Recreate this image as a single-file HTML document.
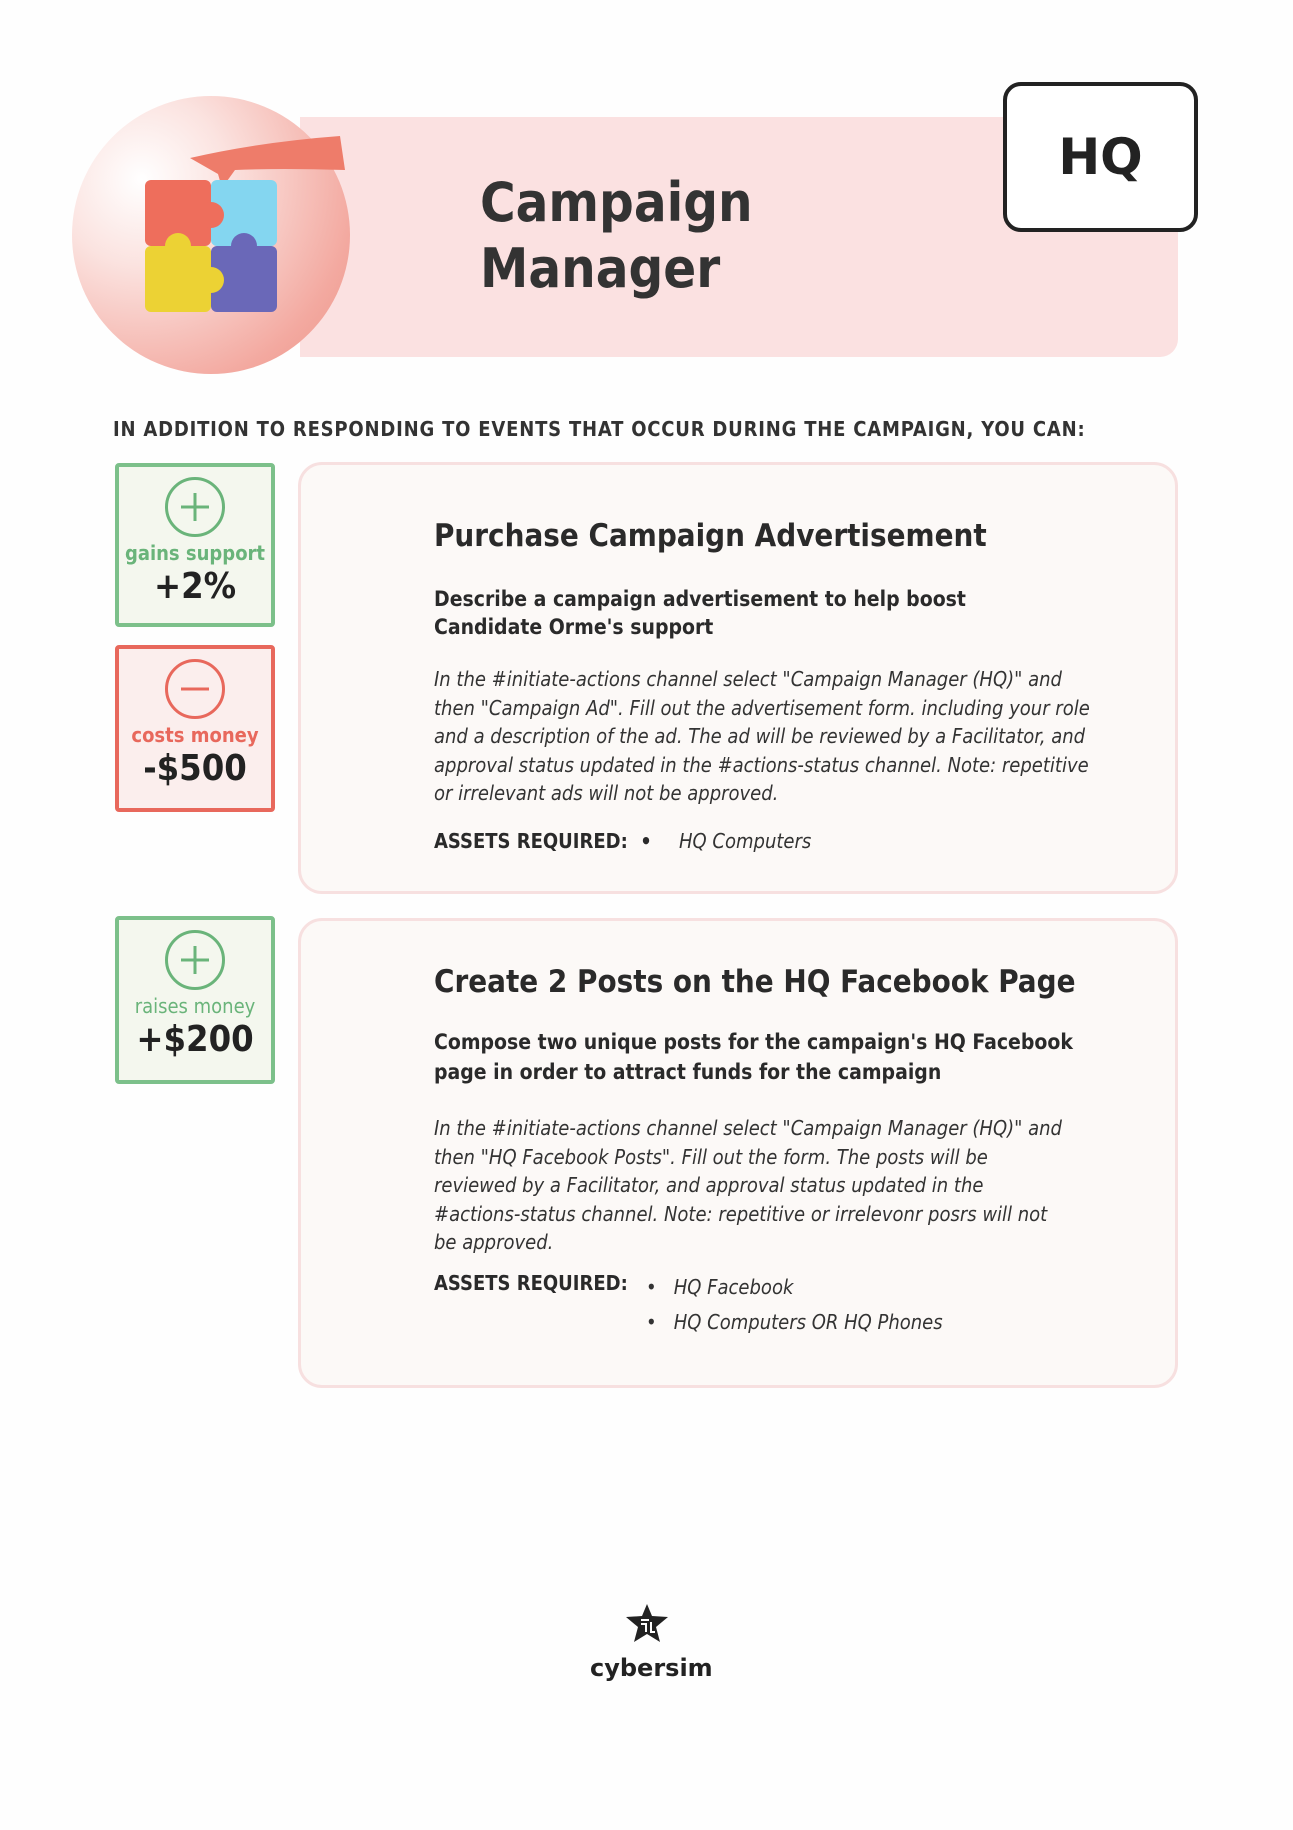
<!DOCTYPE html>
<html><head><meta charset="utf-8"><style>
*{margin:0;padding:0;box-sizing:border-box}
body{width:1293px;height:1830px;background:#fefefe;position:relative;overflow:hidden;font-family:"DejaVu Sans Condensed","DejaVu Sans","Liberation Sans",sans-serif;color:#2a2a2a}
.abs{position:absolute}
.band{left:300px;top:117px;width:878px;height:240px;background:#fbe1e1;border-radius:0 0 18px 0}
.circle{left:72px;top:96px;width:278px;height:278px;border-radius:50%;background:radial-gradient(circle at 25% 30%,#fff 0%,#fbe3e0 30%,#f3a9a0 75%,#ee9488 100%)}
.hq{left:1003px;top:82px;width:195px;height:150px;border:4px solid #222;border-radius:18px;background:#fff;font:bold 50px "DejaVu Sans",sans-serif;text-align:center;line-height:142px;color:#222}
.title{left:480px;top:170px;font-weight:bold;font-size:54px;line-height:66px;color:#333}
.sub{left:113px;top:417px;font-weight:bold;font-size:20px;letter-spacing:.8px;color:#333}
.stat{width:160px;border:4px solid;border-radius:4px;text-align:center}
.stat .ic{width:60px;height:60px;border:3px solid;border-radius:50%;margin:10px auto 0;position:relative}
.stat .lbl{font-weight:bold;font-size:20px;margin-top:4px}
.stat .val{font-weight:bold;font-size:36px;color:#222;line-height:44px}
.g{border-color:#7cc08a;background:#f4f7ee}.g .ic,.g .lbl{border-color:#6ab47a;color:#6ab47a}
.r{border-color:#e8685c;background:#fbeeed}.r .ic,.r .lbl{border-color:#e8685c;color:#e8685c}
.card{left:298px;width:880px;border:3px solid #f7e0e0;border-radius:24px;background:#fcf9f7}
.ct{font-weight:bold;font-size:31px;color:#2a2a2a;position:absolute;left:133px}
.cb{font-weight:bold;font-size:21px;line-height:28px;position:absolute;left:133px}
.ci{font-style:italic;font-size:20px;line-height:28.5px;position:absolute;left:133px;color:#333;font-family:"DejaVu Sans Condensed","DejaVu Sans",sans-serif}
.ar{font-weight:bold;font-size:20px;position:absolute;left:133px}
</style></head><body>
<div class="abs band"></div>
<div class="abs circle"></div>
<svg class="abs" style="left:140px;top:130px" width="220" height="190" viewBox="0 0 220 190">
<path d="M50 28 Q120 12 200 6 L205 40 Q140 38 95 40 L82 58 L78 44 Z" fill="#ee7c6a"/>
<rect x="5" y="50" width="66" height="66" rx="6" fill="#ee6e5c"/>
<rect x="71" y="50" width="66" height="66" rx="6" fill="#84d6f0"/>
<rect x="5" y="116" width="66" height="66" rx="6" fill="#ecd234"/>
<rect x="71" y="116" width="66" height="66" rx="6" fill="#6a68b8"/>
<circle cx="71" cy="85" r="13" fill="#ee6e5c"/><circle cx="38" cy="116" r="13" fill="#ecd234"/>
<circle cx="104" cy="116" r="13" fill="#6a68b8"/><circle cx="71" cy="150" r="13" fill="#ecd234"/>
</svg>
<div class="abs title">Campaign<br>Manager</div>
<div class="abs hq">HQ</div>
<div class="abs sub">IN ADDITION TO RESPONDING TO EVENTS THAT OCCUR DURING THE CAMPAIGN, YOU CAN:</div>

<div class="abs stat g" style="left:115px;top:463px;height:164px">
<div class="ic"><svg width="54" height="54" style="position:absolute;left:0;top:0"><path d="M27 13V41M13 27H41" stroke="#6ab47a" stroke-width="3"/></svg></div>
<div class="lbl">gains support</div><div class="val">+2%</div></div>
<div class="abs stat r" style="left:115px;top:645px;height:167px">
<div class="ic"><svg width="54" height="54" style="position:absolute;left:0;top:0"><path d="M13 27H41" stroke="#e8685c" stroke-width="3"/></svg></div>
<div class="lbl">costs money</div><div class="val">-$500</div></div>
<div class="abs stat g" style="left:115px;top:916px;height:168px">
<div class="ic"><svg width="54" height="54" style="position:absolute;left:0;top:0"><path d="M27 13V41M13 27H41" stroke="#6ab47a" stroke-width="3"/></svg></div>
<div class="lbl" style="font-weight:normal">raises money</div><div class="val">+$200</div></div>

<div class="abs card" style="top:462px;height:432px">
<div class="ct" style="top:53px">Purchase Campaign Advertisement</div>
<div class="cb" style="top:120px">Describe a campaign advertisement to help boost<br>Candidate Orme's support</div>
<div class="ci" style="top:200px">In the #initiate-actions channel select "Campaign Manager (HQ)" and<br>then "Campaign Ad". Fill out the advertisement form. including your role<br>and a description of the ad. The ad will be reviewed by a Facilitator, and<br>approval status updated in the #actions-status channel. Note: repetitive<br>or irrelevant ads will not be approved.</div>
<div class="ar" style="top:364px">ASSETS REQUIRED: &nbsp;•</div>
<div class="ci" style="top:362px;left:378px">HQ Computers</div>
</div>

<div class="abs card" style="top:918px;height:470px">
<div class="ct" style="top:43px">Create 2 Posts on the HQ Facebook Page</div>
<div class="cb" style="top:106px;line-height:30px">Compose two unique posts for the campaign's HQ Facebook<br>page in order to attract funds for the campaign</div>
<div class="ci" style="top:193px">In the #initiate-actions channel select "Campaign Manager (HQ)" and<br>then "HQ Facebook Posts". Fill out the form. The posts will be<br>reviewed by a Facilitator, and approval status updated in the<br>#actions-status channel. Note: repetitive or irrelevonr posrs will not<br>be approved.</div>
<div class="ar" style="top:350px">ASSETS REQUIRED:</div>
<div class="ci" style="top:352px;left:345px">•&nbsp;&nbsp; HQ Facebook</div>
<div class="ci" style="top:387px;left:345px">•&nbsp;&nbsp; HQ Computers OR HQ Phones</div>
</div>

<svg class="abs" style="left:624px;top:1602px" width="46" height="42" viewBox="0 0 46 42">
<path d="M23 2 L28 14 L44 15 L32 25 L36 40 L23 32 L10 40 L14 25 L2 15 L18 14 Z" fill="#222"/>
<path d="M17 18h8M17 22h5v8M27 20v10h4" stroke="#fff" stroke-width="2" fill="none"/>
</svg>
<div class="abs" style="left:590px;top:1654px;font-weight:bold;font-size:24px;color:#222;font-family:'DejaVu Sans',sans-serif">cybersim</div>
</body></html>
